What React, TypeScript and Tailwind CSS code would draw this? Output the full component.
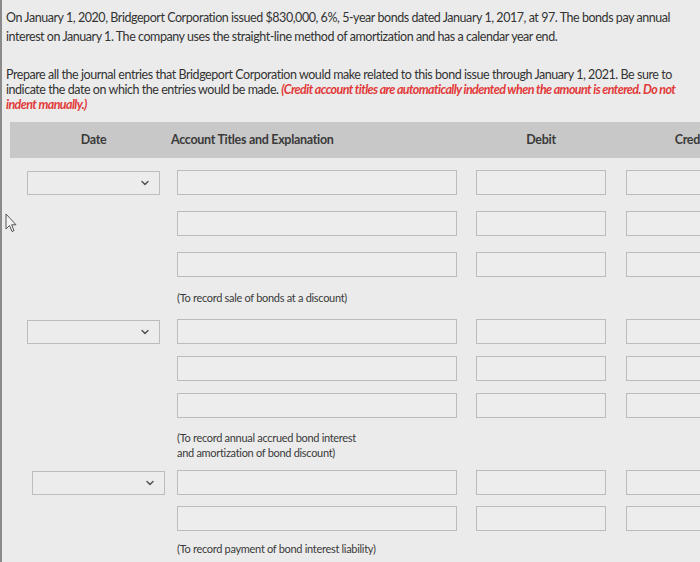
import { ChevronDown } from 'lucide-react'

const font = { fontFamily: 'Lato, "Open Sans", sans-serif' }

function DateSelect({ className = '' }: { className?: string }) {
  return (
    <div
      className={`flex items-center justify-end h-[24px] w-[133px] border border-[#bdbdbd] bg-[#ececec] pr-2 ${className}`}
    >
      <ChevronDown className="w-3 h-3 text-[#555]" strokeWidth={3} />
    </div>
  )
}

function Field({ w }: { w: string }) {
  return <div className={`h-[25px] ${w} border border-[#bcbcbc] bg-[#ededed]`} />
}

function EntryRow({ date, dateClass }: { date?: boolean; dateClass?: string }) {
  return (
    <div className="grid grid-cols-[167px_299px_150px_150px] items-center h-[25px]">
      <div>{date && <DateSelect className={dateClass} />}</div>
      <Field w="w-[280px]" />
      <Field w="w-[130px]" />
      <Field w="w-[130px]" />
    </div>
  )
}

function Note({ children }: { children: React.ReactNode }) {
  return (
    <div className="grid grid-cols-[167px_1fr]">
      <div />
      <p className="text-[11px] leading-[15px] text-[#3a3a3a] tracking-[-0.3px]">{children}</p>
    </div>
  )
}

export default function App() {
  return (
    <div
      className="relative w-[700px] h-[562px] overflow-hidden bg-[#ebebeb] border-l-2 border-[#8a8a8a]"
      style={font}
    >
      {/* 문제 본문 */}
      <div className="pl-[4px] pt-[8px] text-[12.5px] text-[#333] tracking-[-0.45px] whitespace-nowrap">
        <p className="leading-[19px]">
          On January 1, 2020, Bridgeport Corporation issued $830,000, 6%, 5-year bonds dated January 1, 2017, at 97. The
          bonds pay annual
          <br />
          interest on January 1. The company uses the straight-line method of amortization and has a calendar year end.
        </p>
        <p className="mt-[21px] leading-[15px]">
          Prepare all the journal entries that Bridgeport Corporation would make related to this bond issue through January
          1, 2021. Be sure to
          <br />
          indicate the date on which the entries would be made.{' '}
          <span className="font-bold italic text-[#e23a3a] tracking-[-0.6px]">
            (Credit account titles are automatically indented when the amount is entered. Do not
            <br />
            indent manually.)
          </span>
        </p>
      </div>

      {/* 분개 테이블 */}
      <div className="mt-[10px] ml-[8px] w-[780px]">
        <div className="grid grid-cols-[167px_299px_150px_150px] items-center h-[36px] bg-[#c8c8c8] text-[12.5px] font-bold text-[#3a3a3a] tracking-[-0.3px]">
          <div className="text-center">Date</div>
          <div className="-ml-[6px]">Account Titles and Explanation</div>
          <div className="text-center -ml-[20px]">Debit</div>
          <div className="text-center -ml-[20px]">Credit</div>
        </div>

        <div className="flex flex-col gap-[16px] pt-[12px]">
          <EntryRow date dateClass="ml-[17px]" />
          <EntryRow />
          <EntryRow />
        </div>
        <div className="pt-[13px]">
          <Note>(To record sale of bonds at a discount)</Note>
        </div>
        <div className="flex flex-col gap-[12px] pt-[14px]">
          <EntryRow date dateClass="ml-[17px]" />
          <EntryRow />
          <EntryRow />
        </div>
        <div className="pt-[12px]">
          <Note>
            (To record annual accrued bond interest
            <br />
            and amortization of bond discount)
          </Note>
        </div>
        <div className="flex flex-col gap-[11px] pt-[10px]">
          <EntryRow date dateClass="ml-[22px]" />
          <EntryRow />
        </div>
        <div className="pt-[10px]">
          <Note>(To record payment of bond interest liability)</Note>
        </div>
      </div>

      {/* 마우스 커서 */}
      <svg className="absolute left-[3px] top-[213px] w-[12px] h-[20px]" viewBox="0 0 12 20">
        <path
          d="M1 1 L1 16 L4.5 12.5 L7 18.5 L9 17.6 L6.6 11.8 L11 11.8 Z"
          fill="#f4f4f4"
          stroke="#555"
          strokeWidth="1"
          strokeLinejoin="round"
        />
      </svg>
    </div>
  )
}
